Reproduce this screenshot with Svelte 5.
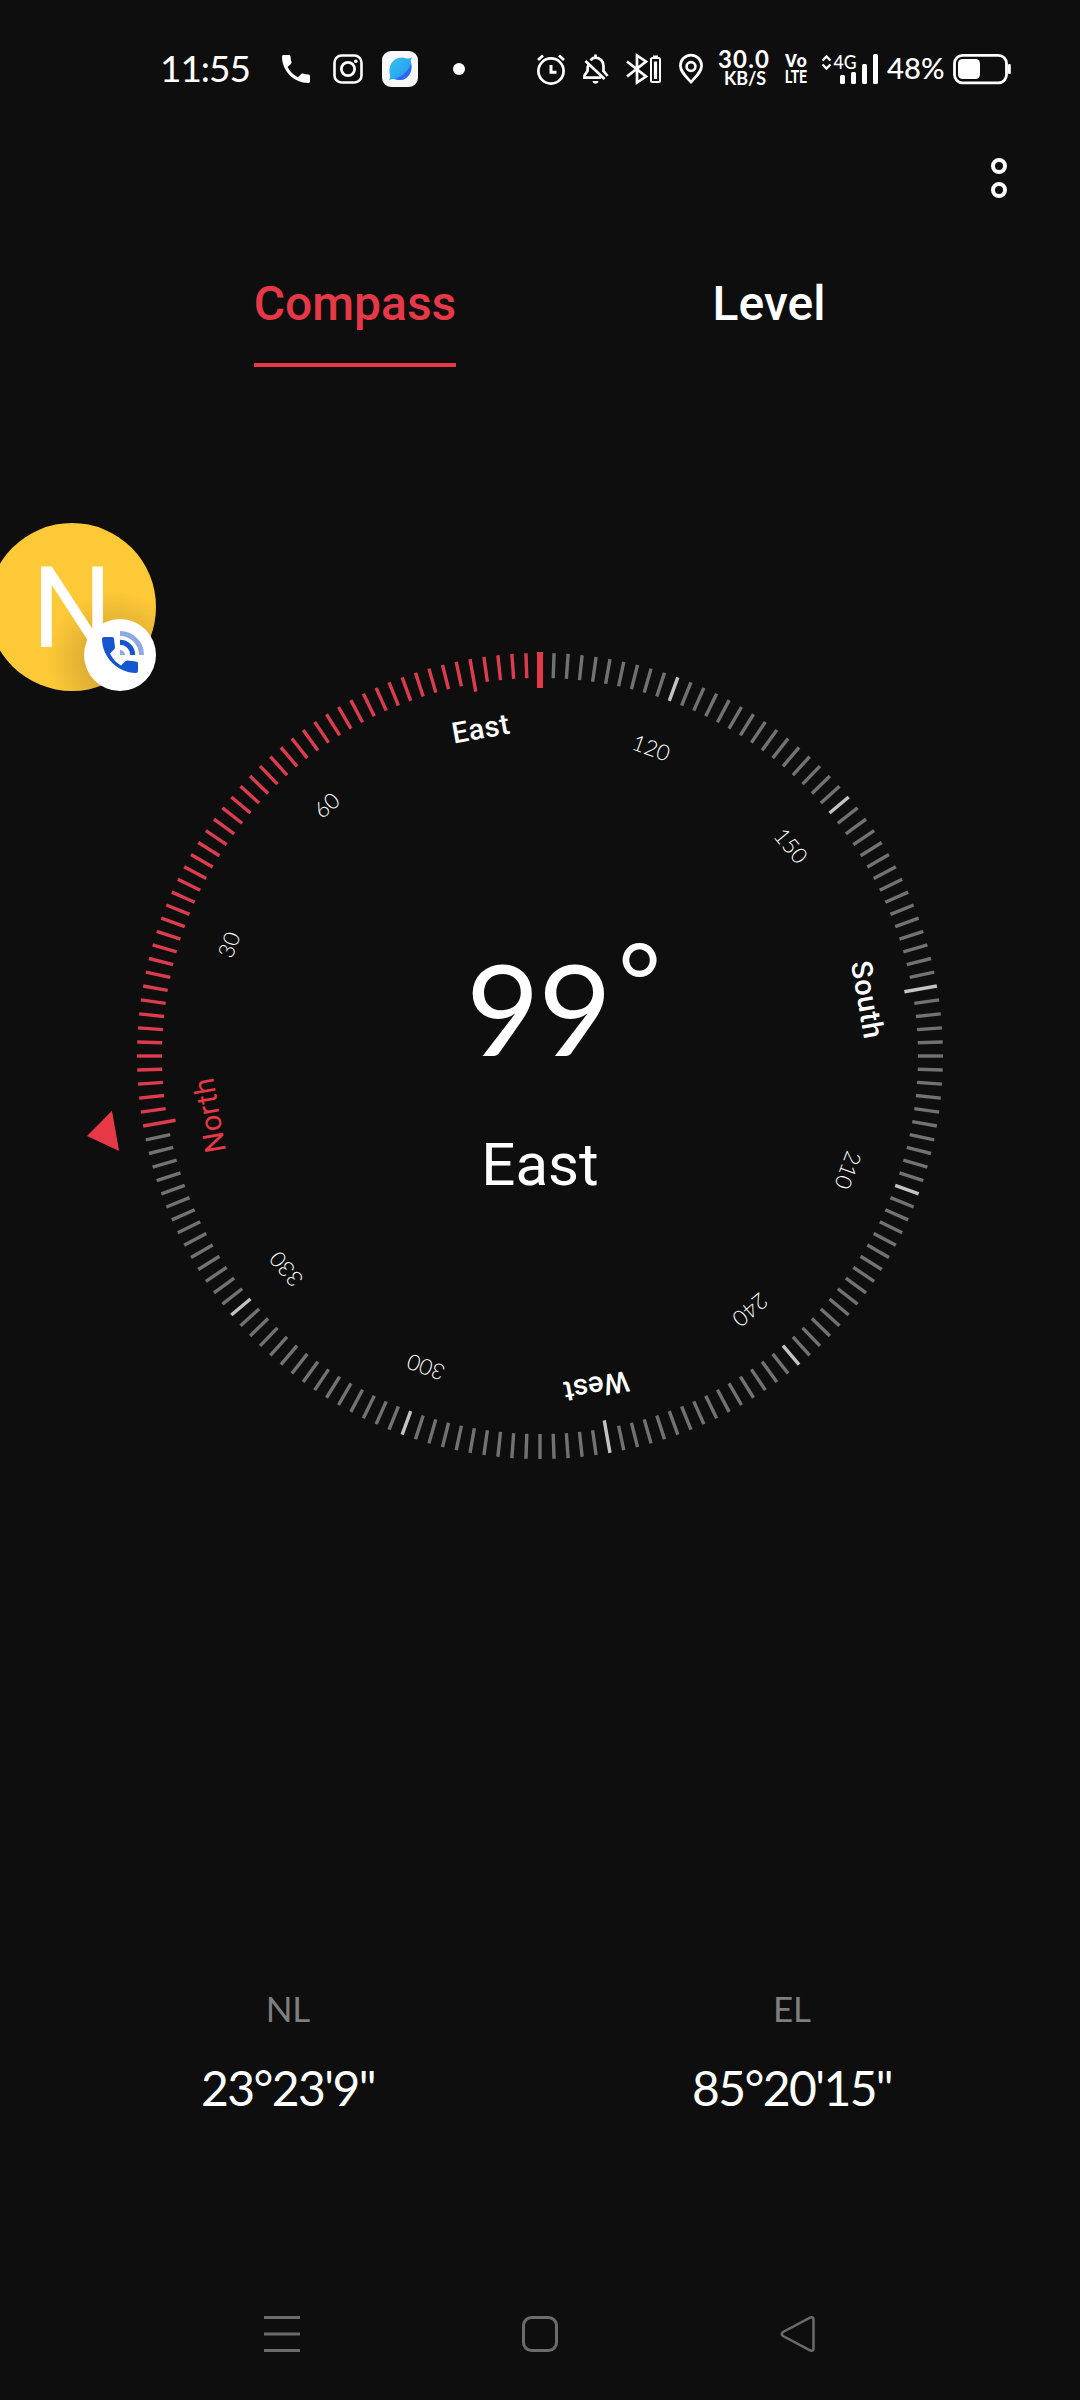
<script lang="ts">
	interface Tick {
		angle: number;
		kind: 'active' | 'major' | 'minor';
		length: number;
	}

	const heading = 99;
	const dialRotation = -100;

	const ticks: Tick[] = Array.from({ length: 180 }, (_, i) => {
		const angle = i * 2;
		const active = angle < 100;
		return {
			angle,
			kind: active ? 'active' : angle % 30 === 0 ? 'major' : 'minor',
			length: angle % 90 === 0 ? 33 : 25
		};
	});

	const labels = [
		{ angle: 0, text: 'North', north: true, width: 75 },
		{ angle: 30, text: '30' },
		{ angle: 60, text: '60' },
		{ angle: 90, text: 'East', width: 58 },
		{ angle: 120, text: '120' },
		{ angle: 150, text: '150' },
		{ angle: 180, text: 'South', width: 78 },
		{ angle: 210, text: '210' },
		{ angle: 240, text: '240' },
		{ angle: 270, text: 'West', width: 66 },
		{ angle: 300, text: '300' },
		{ angle: 330, text: '330' }
	];

	const coordinates = [
		{ label: 'NL', value: '23°23\'9"' },
		{ label: 'EL', value: '85°20\'15"' }
	];

	let tab = $state('Compass');
</script>

<div class="screen">
	<header class="status">
		<div class="status-group">
			<svg width="92" height="40" viewBox="160 49 92 40">
				<text class="lato" x="160" y="82.3" font-size="37" textLength="91">11:55</text>
			</svg>
			<svg class="phone" width="28" height="28" viewBox="3 3 18 18">
				<path d="M6.62 10.79c1.44 2.83 3.76 5.14 6.59 6.59l2.2-2.2c.27-.27.67-.36 1.02-.24 1.12.37 2.33.57 3.57.57.55 0 1 .45 1 1V20c0 .55-.45 1-1 1-9.39 0-17-7.61-17-17 0-.55.45-1 1-1h3.5c.55 0 1 .45 1 1 0 1.25.2 2.45.57 3.57.11.35.03.74-.25 1.02l-2.2 2.2z" />
			</svg>
			<svg class="instagram line" width="30" height="30" viewBox="0 0 30 30">
				<rect x="1.5" y="1.5" width="27" height="27" rx="7" stroke-width="2.6" />
				<circle cx="15" cy="15" r="6.6" stroke-width="2.8" />
				<circle class="solid" cx="22.8" cy="7.3" r="1.8" />
			</svg>
			<svg class="app" width="36" height="36" viewBox="0 0 36 36">
				<defs>
					<linearGradient id="leaf" x1="0" y1="0" x2="1" y2="1">
						<stop offset="0" stop-color="#35c3f2" />
						<stop offset="1" stop-color="#2196f0" />
					</linearGradient>
				</defs>
				<rect width="36" height="36" rx="9" fill="#f7f8fa" />
				<path d="M7 29c1-2 1.500-3 1-5-2.500-9 3-17.500 11.500-17.500 3 0 5 1.500 7.500 1 1.500-.3 2-1 3-1-1 2-1.500 3-1 5C31.500 21 26 29 18 29c-3 0-5-1.500-7.500-1-1.500.3-2.500 1-3.500 1z" fill="url(#leaf)" />
				<path d="M29.300 13c1 8-4 16-11.300 16-2.500 0-4-1-6-1C20 26 26 20 29.300 13z" fill="#3365f2" />
			</svg>
			<span class="dot"></span>
		</div>

		<div class="status-group">
			<svg class="line" width="30" height="32" viewBox="536 53 30 32">
				<circle cx="551" cy="71" r="12.6" stroke-width="2.7" />
				<path d="M551 65v7.2h5.5" stroke-width="3" />
				<path d="M538 60l5-4.5M564 60l-5-4.5" stroke-width="2.8" />
			</svg>
			<svg class="line bell" width="28" height="32" viewBox="582 53 28 32">
				<path d="M588.5 64.5c-1 2-1 4-1 6.500l-3 4.500v2.200h16.500M590.500 60.500c1.500-2 3.500-2.800 5-2.800 4.500 0 8 3.500 8 8.300v6M595.500 54.500v3M585.500 61l19 18" stroke-width="2.7" />
				<path d="M603.5 71l4 5" stroke-width="2.7" />
				<path class="solid" d="M592.500 81h6c0 1.500-1.500 2.800-3 2.800s-3-1.300-3-2.800z" />
			</svg>
			<svg class="line bluetooth" width="36" height="32" viewBox="626 53 36 32">
				<path d="M627 61.500l19 15-9 6v-27l9 6-19 15" stroke-width="2.700" />
				<rect x="651" y="58" width="9" height="24" rx="1.500" stroke-width="2" />
				<path d="M655.500 61.500v17.500" stroke-width="3.200" />
				<path d="M653 56.500h5" stroke-width="2" />
			</svg>
			<svg class="line pin" width="26" height="32" viewBox="678 53 26 32">
				<path d="M691 82c-5.500-6-10.600-10.500-10.600-16.200a10.600 10.600 0 0 1 21.200 0c0 5.700-5.100 10.200-10.600 16.200z" stroke-width="2.700" />
				<circle cx="691" cy="66.500" r="4.400" stroke-width="2.600" />
			</svg>
			<svg class="speed" width="52" height="40" viewBox="718 50 52 40">
				<text class="lato bold" x="718" y="69" font-size="24" textLength="51">30.0</text>
				<text class="lato bold" x="724" y="86" font-size="18" textLength="42">KB/S</text>
			</svg>
			<svg class="volte" width="24" height="40" viewBox="784 50 24 40">
				<text class="bold" x="785" y="68" font-size="18.500" textLength="22" lengthAdjust="spacingAndGlyphs">Vo</text>
				<text class="bold" x="785" y="84" font-size="18.500" textLength="22" lengthAdjust="spacingAndGlyphs">LTE</text>
			</svg>
			<svg class="signal" width="58" height="32" viewBox="821 53 58 32">
				<path class="hollow" d="M822.500 60.500l4-4 4 4M822.500 64.500l4 4 4-4" stroke-width="2.400" />
				<text class="lato medium" x="833.500" y="69" font-size="19" textLength="23" lengthAdjust="spacingAndGlyphs">4G</text>
				<rect x="840" y="75" width="5" height="9" rx="1.500" />
				<rect x="851" y="72" width="5" height="12" rx="1.500" />
				<rect x="862" y="64" width="5" height="20" rx="1.500" />
				<rect x="873" y="54" width="5" height="30" rx="1.500" />
			</svg>
			<svg class="percent" width="58" height="40" viewBox="887 49 58 40">
				<text class="lato medium" x="887" y="78.500" font-size="29.500" textLength="57.500" lengthAdjust="spacingAndGlyphs">48%</text>
			</svg>
			<svg class="battery" width="60" height="32" viewBox="952 53 60 32">
				<rect class="hollow" x="954.500" y="55.300" width="52" height="27.500" rx="8" stroke-width="2.800" />
				<rect x="958" y="59" width="22" height="20" rx="4.500" />
				<rect x="1008" y="64" width="2.800" height="10" rx="1" />
			</svg>
		</div>
	</header>

	<div class="toolbar">
		<button class="more" aria-label="More options">
			<span></span>
			<span></span>
		</button>
	</div>

	<nav class="tabs">
		{#each ['Compass', 'Level'] as name}
			<button class="tab" class:selected={tab === name} onclick={() => (tab = name)}>
				<span>{name}</span>
			</button>
		{/each}
	</nav>

	<svg class="dial" width="1080" height="852" viewBox="0 630 1080 852">
		<g transform="translate(540 1056)">
			<g transform="rotate({dialRotation})">
				{#each ticks as tick}
					<line
						class="tick {tick.kind}"
						y1={-403}
						y2={-403 + tick.length}
						transform="rotate({tick.angle})"
					/>
				{/each}
				<path class="pointer" d="M0-460L20.500-431H-20.500z" />
			</g>
			<g transform="translate(-1.5 1.5) rotate({dialRotation})">
				{#each labels as label}
					<text
						class={label.width ? 'direction' : 'degree'}
						class:north={label.north}
						y={label.width ? -324 : -321.5}
						textLength={label.width}
						transform="rotate({label.angle})"
					>{label.text}</text>
				{/each}
			</g>
			<rect class="needle" x="-3" y="-404" width="6" height="36" />
			<text class="heading" x="-74" y="0">{heading}</text>
			<text class="ring" x="99.500" y="-37">°</text>
			<text class="facing" x="0" y="128.500">East</text>
		</g>
	</svg>

	<section class="coordinates">
		{#each coordinates as item}
			<div class="coordinate">
				<span class="coordinate-label">{item.label}</span>
				<span class="coordinate-value">{item.value}</span>
			</div>
		{/each}
	</section>

	<footer class="navbar">
		<svg width="38" height="38" viewBox="263 2315 38 38">
			<path d="M264 2317.500h36M264 2334h36M264 2350.500h36" />
		</svg>
		<svg width="38" height="38" viewBox="521 2315 38 38">
			<rect x="523.500" y="2317.500" width="33" height="33" rx="8" />
		</svg>
		<svg width="38" height="38" viewBox="779 2315 38 38">
			<path d="M783 2332l27.500-14.500q3-1 3 2v29q0 3-3 2l-27.500-14.500q-2.500-2 0-4z" stroke-width="2.500" />
		</svg>
	</footer>

	<div class="bubble">
		<svg width="168" height="168" viewBox="-12 523 168 168">
			<defs>
				<radialGradient id="shade" gradientUnits="userSpaceOnUse" cx="116" cy="660" r="68">
					<stop offset="0.4" stop-color="#8a6a30" stop-opacity="0.3" />
					<stop offset="1" stop-color="#8a6a30" stop-opacity="0" />
				</radialGradient>
			</defs>
			<circle cx="72" cy="607" r="84" fill="#fec937" />
			<circle cx="72" cy="607" r="84" fill="url(#shade)" />
			<text x="72" y="647" font-size="113" text-anchor="middle" fill="#fff">N</text>
			<circle cx="120" cy="655" r="36" fill="#fff" />
			<path d="M104 637h8q2 0 2 2l1 8q0 1.500-1 2.500l-4 4q4 8 11 12l4-4q1-1 2.500-1l8.500 1q2 0 2 2v7.500q0 2-2 2C117 673 102 656 102 639q0-2 2-2z" fill="#1556d0" />
			<path d="M120 655v-5a5 5 0 0 1 5 5z" fill="#8fa9e4" />
			<path d="M120 642.300a12.700 12.700 0 0 1 12.700 12.700" class="hollow" stroke="#1556d0" stroke-width="5" />
			<path d="M120 633.500a21.500 21.500 0 0 1 21.500 21.500" class="hollow" stroke="#8fa9e4" stroke-width="5" />
		</svg>
	</div>
</div>

<style>
	:global(body) {
		margin: 0;
		background: #0e0e0e;
	}

	.screen {
		--accent: #e73848;
		position: relative;
		display: flex;
		flex-direction: column;
		width: 1080px;
		height: 2400px;
		overflow: hidden;
		background: #0e0e0e;
		color: #fff;
		font-family: Roboto, sans-serif;
	}

	svg {
		display: block;
		flex-shrink: 0;
		overflow: visible;
		fill: #fff;
	}

	button {
		padding: 0;
		border: 0;
		background: none;
		color: inherit;
		font: inherit;
	}

	.lato {
		font-family: Lato, sans-serif;
	}

	.medium {
		font-weight: 500;
	}

	.bold {
		font-weight: 700;
	}

	/* Status bar */
	.status {
		display: flex;
		justify-content: space-between;
		height: 138px;
		padding: 0 68px 0 160px;
		box-sizing: border-box;
	}

	.status-group {
		display: flex;
		align-items: center;
	}

	.line {
		fill: none;
		stroke: #fff;
	}

	.line .solid {
		fill: #fff;
		stroke: none;
	}

	.hollow {
		fill: none;
	}

	.status .hollow {
		stroke: #fff;
	}

	.phone {
		margin-left: 30px;
	}

	.instagram {
		margin-left: 23px;
	}

	.app {
		margin-left: 19px;
	}

	.dot {
		width: 12px;
		height: 12px;
		margin-left: 35px;
		border-radius: 50%;
		background: #fff;
	}

	.bell,
	.bluetooth,
	.pin {
		margin-left: 16px;
	}

	.speed,
	.volte {
		margin-left: 14px;
	}

	.signal {
		margin-left: 13px;
	}

	.percent {
		margin-left: 8px;
	}

	.battery {
		margin-left: 7px;
	}

	/* Toolbar and tabs */
	.toolbar {
		display: flex;
		justify-content: flex-end;
		height: 112px;
		padding: 20px 73px 0 0;
		box-sizing: border-box;
	}

	.more {
		display: flex;
		flex-direction: column;
		gap: 8px;
		width: 16px;
		height: 40px;
	}

	.more span {
		width: 16px;
		height: 16px;
		border: 4px solid #fff;
		border-radius: 50%;
		box-sizing: border-box;
	}

	.tabs {
		display: flex;
		height: 117px;
		padding: 0 104px 0 148px;
	}

	.tab {
		display: flex;
		justify-content: center;
		width: 414px;
		font-size: 48px;
		font-weight: 500;
	}

	.tab span {
		height: 113px;
		line-height: 108px;
		border-bottom: 4px solid transparent;
	}

	.tab.selected {
		color: var(--accent);
	}

	.tab.selected span {
		border-color: var(--accent);
	}

	/* Dial */
	.dial {
		margin-top: 263px;
	}

	.tick {
		stroke-width: 3.4px;
	}

	.tick.active {
		stroke: #dc3c4e;
	}

	.tick.major {
		stroke: #c3c3c3;
	}

	.tick.minor {
		stroke: #727272;
	}

	.direction {
		font-size: 29px;
		font-weight: 500;
		text-anchor: middle;
	}

	.direction.north {
		font-weight: 400;
	}

	.degree {
		font-family: Lato, sans-serif;
		font-size: 22px;
		font-weight: 300;
		text-anchor: middle;
	}

	.north,
	.pointer,
	.needle {
		fill: var(--accent);
	}

	.heading {
		font-family: Lato, sans-serif;
		font-size: 127px;
		letter-spacing: -1.5px;
	}

	.ring {
		font-family: Lato, sans-serif;
		font-size: 104px;
		text-anchor: middle;
	}

	.facing {
		font-size: 60px;
		text-anchor: middle;
	}

	/* Coordinates */
	.coordinates {
		display: flex;
		margin-top: 500px;
		padding: 0 36px;
	}

	.coordinate {
		display: flex;
		flex: 1;
		flex-direction: column;
		align-items: center;
		gap: 24px;
		font-family: Lato, sans-serif;
	}

	.coordinate-label {
		color: #7f7f7f;
		font-size: 35px;
		line-height: 52px;
	}

	.coordinate-value {
		font-size: 48px;
		line-height: 60px;
		letter-spacing: -1.6px;
	}

	/* Navigation bar */
	.navbar {
		display: flex;
		justify-content: space-between;
		margin-top: auto;
		padding: 0 263px 47px;
	}

	.navbar svg {
		fill: none;
		stroke: #6b6b6b;
		stroke-width: 3px;
	}

	/* Floating caller bubble */
	.bubble {
		position: absolute;
		top: 523px;
		left: -12px;
	}
</style>
